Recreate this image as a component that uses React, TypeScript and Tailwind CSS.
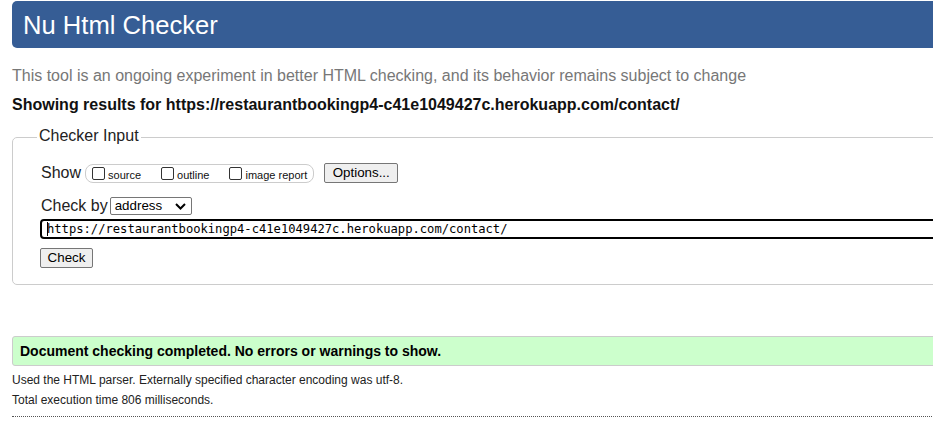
import React from "react";

const sans = { fontFamily: '"Liberation Sans", Arial, sans-serif' };

function Box({ label }: { label: string }) {
  return (
    <span className="flex items-center">
      <span className="block w-[13px] h-[13px] border border-[#333] rounded-[2px] bg-white" />
      <span className="ml-[3px] text-[11px] leading-[13px] text-[#111] translate-y-[2px]">{label}</span>
    </span>
  );
}

export default function App() {
  return (
    <div className="w-[933px] h-[444px] overflow-hidden bg-white" style={sans}>
      <div className="w-[1100px] pl-3">
        <div className="mt-[1px] h-[47px] bg-[#365d95] rounded-[5px] flex items-center pl-[11px]">
          <h1 className="text-[25.6px] leading-[30px] text-white font-normal">Nu Html Checker</h1>
        </div>
        <p className="mt-[18px] text-[16px] leading-[20px] text-[#777]">
          This tool is an ongoing experiment in better HTML checking, and its behavior remains subject to change
        </p>
        <p className="mt-[9px] text-[16px] leading-[20px] font-bold text-[#111]">
          Showing results for https://restaurantbookingp4-c41e1049427c.herokuapp.com/contact/
        </p>
        <fieldset className="mt-[12px] border border-[#ccc] rounded-[5px] pl-[27px] pt-[16px] pb-[16px]">
          <legend className="-ml-[3px] px-[2px] text-[16px] leading-[20px] text-[#222]">
            <span className="relative -top-[1px]">Checker Input</span>
          </legend>
          <div className="h-[20px] flex items-center text-[#222]">
            <span className="ml-[1px] text-[16px] leading-[20px]">Show</span>
            <span className="ml-[4px] h-[19px] flex items-center border border-[#ccc] rounded-[8px] pl-[6px] pr-[6px] gap-[20px]">
              <Box label="source" />
              <Box label="outline" />
              <Box label="image report" />
            </span>
            <span className="ml-[10px] h-[20px] w-[74px] flex items-center justify-center bg-[#efefef] border border-[#767676] rounded-[2px] text-[13.33px] text-black">
              Options...
            </span>
          </div>
          <div className="mt-[13px] h-[20px] flex items-center text-[#222]">
            <span className="ml-[1px] text-[16px] leading-[20px]">Check by</span>
            <span className="ml-[2px] h-[18px] w-[82px] flex items-center justify-between bg-white border border-[#767676] rounded-[2px] pl-[4px] pr-[4px] text-[13.33px] text-black">
              <span>address</span>
              <svg width="11" height="7" viewBox="0 0 11 7" className="mr-[1px]">
                <path d="M1 1 L5.5 5.5 L10 1" fill="none" stroke="#000" strokeWidth="2" />
              </svg>
            </span>
          </div>
          <div className="mt-[3px] h-[20px] border-2 border-black rounded-[4px] bg-white flex items-center pl-[5px]">
            <span className="w-[1px] h-[14px] bg-black -mr-[1px]" />
            <span
              className="text-[12.15px] text-black whitespace-nowrap"
              style={{ fontFamily: '"DejaVu Sans Mono", "Liberation Mono", monospace' }}
            >
              https://restaurantbookingp4-c41e1049427c.herokuapp.com/contact/
            </span>
          </div>
          <div className="mt-[9px] h-[20px] w-[53px] flex items-center justify-center bg-[#efefef] border border-[#767676] rounded-[2px] text-[13.33px] text-black">
            Check
          </div>
        </fieldset>
        <div className="mt-[51px] h-[30px] bg-[#ccffcc] border border-[#ccc] rounded-[3px] flex items-center pl-[7px]">
          <span className="text-[14px] font-bold text-black">
            Document checking completed. No errors or warnings to show.
          </span>
        </div>
        <p className="mt-[4px] text-[12px] leading-[20px] text-[#222]">
          Used the HTML parser. Externally specified character encoding was utf-8.
        </p>
        <p className="text-[12px] leading-[20px] text-[#222]">Total execution time 806 milliseconds.</p>
        <div className="mt-[6px] border-t border-dotted border-[#555]" />
      </div>
    </div>
  );
}
